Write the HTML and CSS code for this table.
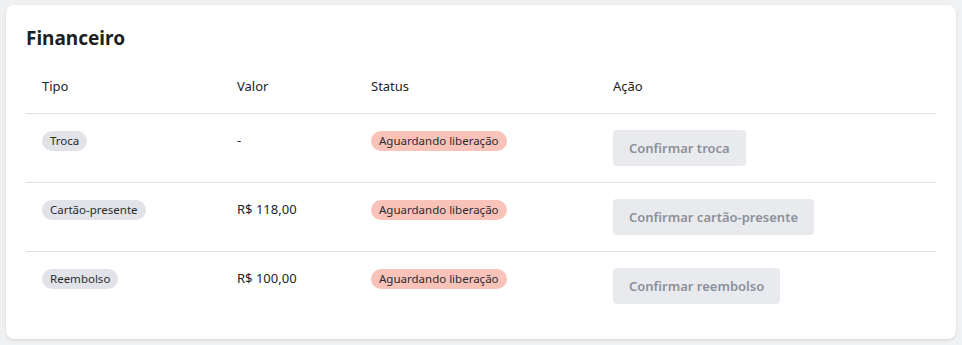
FILE: index.html
```html
<!DOCTYPE html>
<html lang="pt-BR">
<head>
<meta charset="utf-8">
<title>Financeiro</title>
<link rel="stylesheet" href="styles.css">
</head>
<body>
<section class="card">
  <h2 class="card-title">Financeiro</h2>
  <table class="fin-table">
    <colgroup>
      <col class="col-tipo">
      <col class="col-valor">
      <col class="col-status">
      <col class="col-acao">
    </colgroup>
    <thead>
      <tr>
        <th>Tipo</th>
        <th>Valor</th>
        <th>Status</th>
        <th>Ação</th>
      </tr>
    </thead>
    <tbody>
      <tr>
        <td><span class="tag">Troca</span></td>
        <td class="value">-</td>
        <td><span class="tag tag-pending">Aguardando liberação</span></td>
        <td><button class="btn" disabled>Confirmar troca</button></td>
      </tr>
      <tr>
        <td><span class="tag">Cartão-presente</span></td>
        <td class="value">R$ 118,00</td>
        <td><span class="tag tag-pending">Aguardando liberação</span></td>
        <td><button class="btn" disabled>Confirmar cartão-presente</button></td>
      </tr>
      <tr>
        <td><span class="tag">Reembolso</span></td>
        <td class="value">R$ 100,00</td>
        <td><span class="tag tag-pending">Aguardando liberação</span></td>
        <td><button class="btn" disabled>Confirmar reembolso</button></td>
      </tr>
    </tbody>
  </table>
</section>
</body>
</html>
```
FILE: styles.css
```css
* { box-sizing: border-box; }

html, body {
  margin: 0;
  padding: 0;
  background: #f0f1f3;
}

body {
  padding: 5px 6px 6px 6px;
  font-family: "Noto Sans", "Open Sans", sans-serif;
  color: #222428;
  font-size: 13px;
}

.card {
  background: #ffffff;
  border-radius: 8px;
  box-shadow: 0 1px 3px rgba(0, 0, 0, 0.12);
  padding: 19px 20px 20px 20px;
  height: 334px;
}

.card-title {
  margin: 0 0 9px 0;
  font-size: 19px;
  font-weight: 700;
  line-height: 28px;
  color: #1d1f23;
}

.fin-table {
  width: 100%;
  border-collapse: collapse;
  table-layout: fixed;
}

.col-tipo { width: 195px; }
.col-valor { width: 134px; }
.col-status { width: 242px; }

.fin-table th {
  text-align: left;
  font-weight: 400;
  font-size: 13px;
  line-height: 18px;
  padding: 16px 16px 18px 16px;
  border-bottom: 1px solid #dfe0e3;
}

.fin-table td {
  vertical-align: top;
  padding: 16px 16px 16px 16px;
  line-height: 20px;
  border-bottom: 1px solid #dfe0e3;
}

.fin-table tbody tr:last-child td {
  border-bottom: none;
}

.value {
  font-size: 13px;
}

.tag {
  display: inline-block;
  height: 20px;
  line-height: 20px;
  padding: 0 8px;
  border-radius: 10px;
  background: #e1e3e8;
  color: #2a2c30;
  font-size: 11.5px;
  white-space: nowrap;
}

.tag-pending {
  background: #f9c3b9;
}

.btn {
  height: 36px;
  padding: 0 16px;
  border: none;
  border-radius: 4px;
  background: #e9eaee;
  color: #8c9099;
  font-family: inherit;
  font-size: 13px;
  font-weight: 600;
  cursor: not-allowed;
}
```
